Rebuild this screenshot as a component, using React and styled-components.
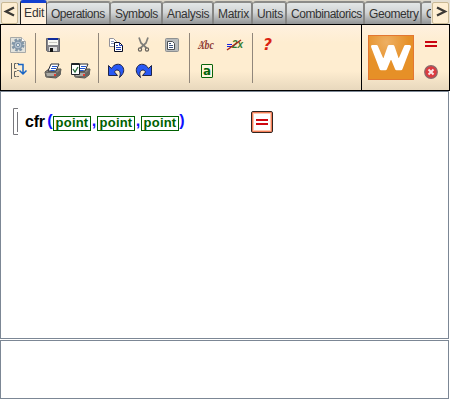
import React from 'react';
import styled, { createGlobalStyle } from 'styled-components';

const GlobalStyle = createGlobalStyle`
  * { box-sizing: border-box; }
  body { margin: 0; background: #fff; font-family: "Liberation Sans", Arial, sans-serif; }
`;

const Window = styled.div`
  width: 450px;
  height: 400px;
  overflow: hidden;
  display: flex;
  flex-direction: column;
  background: #fff;
`;

const TabBar = styled.div`
  display: flex;
  height: 24px;
  flex: none;
  background: #dad5c8;
`;

const ScrollSlot = styled.div`
  width: ${(p) => p.$width}px;
  padding: 2px 1px 0 ${(p) => p.$left}px;
  flex: none;
  background: #e5e0d5;
`;

const ScrollButton = styled.button`
  display: flex;
  align-items: center;
  justify-content: center;
  width: 17px;
  height: 22px;
  padding: 0;
  background: #feeed2;
  border: 1px solid #c9b995;
  border-radius: 2px;
`;

const TabStrip = styled.div`
  display: flex;
  flex: 1;
  min-width: 0;
  overflow: hidden;
`;

const Tab = styled.div`
  flex: none;
  width: ${(p) => p.$width}px;
  height: ${(p) => (p.$active ? 24 : 23)}px;
  margin-top: ${(p) => (p.$active ? 0 : 1)}px;
  padding: ${(p) => (p.$active ? '2px 0 0 3px' : '3px 0 0 4px')};
  font-size: 12px;
  line-height: 16px;
  letter-spacing: ${(p) => p.$track}px;
  white-space: nowrap;
  color: #333;
  background: ${(p) => (p.$active ? '#fff0dc' : 'linear-gradient(#e3e7e7, #d1d4d5 45%, #929495)')};
  border-top: ${(p) => (p.$active ? '3px solid #123fd0' : '2px solid #8b8b88')};
  border-right: ${(p) => (p.$active ? '1px solid #555' : '2px solid #858583')};
  border-left: ${(p) => (p.$active ? '1px solid #222' : '0')};
  border-radius: 3px 3px 0 0;
`;

const Panels = styled.div`
  display: flex;
  flex: none;
  height: 67px;
  border: 1px solid #000;
  background: linear-gradient(#fff1df 0, #feedd0 18px, #feedd0 46px, #e8d8bd 65px);
`;

const Toolbar = styled.div`
  display: flex;
  width: 361px;
  padding-top: 7px;
  border-right: 1px solid #000;
`;

const ToolGroup = styled.div`
  display: grid;
  grid-template-columns: repeat(${(p) => p.$cols}, 28px);
  grid-template-rows: 26px 26px;
  height: 52px;
  padding: 0 3px;
`;

const Divider = styled.div`
  width: 1px;
  height: 50px;
  margin-top: 1px;
  background: #91877b;
`;

const IconSvg = styled.svg`
  display: block;
  width: 28px;
  height: 26px;
  overflow: visible;
`;

const ActionPanel = styled.div`
  display: flex;
  flex: 1;
  padding: 10px 0 0 6px;
`;

const Logo = styled.svg`
  display: block;
  width: 46px;
  height: 45px;
`;

const ActionColumn = styled.div`
  display: flex;
  flex-direction: column;
  margin: -3px 0 0 2px;
`;

const Editor = styled.div`
  flex: none;
  height: 248px;
  border: 1px solid #7c8795;
  width: 449px;
  padding: 16px 0 0 12px;
`;

const Line = styled.div`
  display: flex;
  height: 28px;
`;

const Bracket = styled.svg`
  width: 6px;
  height: 28px;
`;

const FunctionName = styled.span`
  width: 22px;
  margin-left: 6px;
  padding-top: 3px;
  font-size: 16px;
  line-height: 22px;
  font-weight: 700;
  letter-spacing: -0.2px;
  color: #000;
`;

const Punctuation = styled.span`
  width: ${(p) => p.$width}px;
  padding-top: 2px;
  font-size: 16px;
  line-height: 22px;
  font-weight: 700;
  text-align: center;
  color: #1010ff;
`;

const Placeholder = styled.span`
  width: 38px;
  height: 15px;
  margin-top: 8px;
  border: 1px solid #006000;
  color: #006000;
  font-size: 13px;
  line-height: 12px;
  font-weight: 700;
  letter-spacing: 0.2px;
  text-align: center;
`;

const EvaluateButton = styled.button`
  display: flex;
  align-items: center;
  justify-content: center;
  width: 22px;
  height: 22px;
  margin: 3px 0 0 66px;
  padding: 0;
  background: #fff;
  border: 1px solid #33251f;
  border-radius: 2px;
  box-shadow: inset 0 0 0 1px #f47d58, inset 0 0 0 2px #ffc9b0;
`;

const Message = styled.div`
  flex: none;
  width: 449px;
  height: 59px;
  margin-top: 1px;
  border: 1px solid #7c8795;
`;

const Icon = ({ children }) => <IconSvg viewBox="0 0 28 26">{children}</IconSvg>;

const Chevron = ({ d }) => (
  <svg width="15" height="20" viewBox="0 0 15 20">
    <path d={d} fill="none" stroke="#3b3935" strokeWidth="2.300" />
  </svg>
);

const Gear = () => (
  <Icon>
    <path d="M6.500 5.500h11l4 4v11h-15z" fill="#e3e3dc" stroke="#a7a9a8" />
    <path d="M17.500 5.500v4h4" fill="#fff" stroke="#a7a9a8" />
    <circle cx="14" cy="13" r="5" fill="none" stroke="#8296a8" strokeWidth="3" strokeDasharray="2.400 1.530" />
    <circle cx="14" cy="13" r="4" fill="#b1bfcd" stroke="#8296a8" strokeWidth="1.500" />
    <circle cx="14" cy="13" r="1.600" fill="#edf0ef" stroke="#7890a5" />
  </Icon>
);

const Flow = () => (
  <Icon>
    <path d="M7.500 5v16M12.500 5.500h-2v5h2M12.500 13.500h-2v5h2" fill="none" stroke="#62625e" />
    <path d="M13 5.500h2M13 12.500h2M13 18.500h2" stroke="#77736b" />
    <path d="M14 6.500h5v9M15.500 12.500l3.500 3.500 3.500-3.500" fill="none" stroke="#1664c5" strokeWidth="1.500" />
  </Icon>
);

const Disk = () => (
  <Icon>
    <path d="M7.500 6.500h13v13h-12l-1-1z" fill="#85858a" stroke="#66676c" />
    <path d="M9 7h10v6H9z" fill="#f8f8f3" />
    <path d="M9 6h10v2H9z" fill="#102b9b" />
    <path d="M10 10.500h8" stroke="#c9c9c3" />
    <path d="M10 15h8v4h-8z" fill="#ddd" />
    <path d="M11 16h3v4h-3z" fill="#111" />
  </Icon>
);

const PrinterShape = () => (
  <g>
    <path d="M6 14l4-3 12 0-1 6-4 3-10-1z" fill="#83817d" stroke="#55534f" />
    <path d="M6.500 14.500h11v4h-10z" fill="#aaa9a3" stroke="#6a6964" />
    <path d="M18 15l4-4v5l-4 3z" fill="#666560" />
    <path d="M9 13l3-7h8l-3 7z" fill="#fff" stroke="#292c36" />
    <path d="M13 8.500h5M12 10.500h5M11.500 12.500h4" stroke="#2053ce" />
    <path d="M15 16h2v2h-2z" fill="#e23b30" />
  </g>
);

const Printer = () => <Icon><PrinterShape /></Icon>;

const PrintPreview = () => (
  <Icon>
    <g transform="translate(1 0)"><PrinterShape /></g>
    <path d="M4.500 5.500h8v11h-8z" fill="#fff" stroke="#20242a" />
    <path d="M4 6.500h9" stroke="#20242a" />
    <path d="M6 11l2 3 3-5" fill="none" stroke="#286c3b" strokeWidth="1.300" />
  </Icon>
);

const Copy = () => (
  <Icon>
    <path d="M7.500 6.500h4l3 3v5h-7z" fill="#fff" stroke="#92929b" />
    <path d="M9 9.500h3M9 11.500h4" stroke="#8494bd" />
    <path d="M12.500 10.500h5l3 3v6h-8z" fill="#fff" stroke="#090d22" />
    <path d="M17.500 10.500v3h3M14 13.500h2M14 15.500h5M14 17.500h5" fill="none" stroke="#2440b4" />
  </Icon>
);

const Cut = () => (
  <Icon>
    <path d="M9 5.500l2 5.500 5.500 5M18 5.500l-2 5.500-5.500 5" fill="none" stroke="#7f7e79" strokeWidth="1.700" />
    <circle cx="10" cy="17.500" r="1.600" fill="none" stroke="#67625b" strokeWidth="1.200" />
    <circle cx="17" cy="17.500" r="1.600" fill="none" stroke="#67625b" strokeWidth="1.200" />
  </Icon>
);

const Paste = () => (
  <Icon>
    <rect x="7.500" y="6.500" width="13" height="13" rx="1" fill="#b8bbbc" stroke="#8e9192" />
    <path d="M9.500 9.500h5l2 2v6h-7z" fill="#fff" stroke="#4b4f52" />
    <path d="M11 11.500h2M11 13.500h4M11 15.500h4" stroke="#3e557e" />
  </Icon>
);

const UndoPath = () => (
  <path d="M6.500 7.500l3 3C12 5.500 18 5 20.500 8.500c2.500 4 1 7.500-3 11 1.500-4 .5-7.500-2.500-7.500-1.500 0-2 1-2.500 2l3 3.500h-9z" fill="#2858f4" stroke="#202548" strokeWidth="1" strokeLinejoin="round" />
);
const Undo = () => <Icon><UndoPath /></Icon>;
const Redo = () => <Icon><g transform="translate(28 0) scale(-1 1)"><UndoPath /></g></Icon>;

const TextStyle = () => (
  <Icon>
    <text x="5" y="17" fontFamily="Liberation Serif, serif" fontSize="12" fontStyle="italic" fontWeight="700" fill="#91413a" textLength="16" lengthAdjust="spacingAndGlyphs">Abc</text>
    <path d="M5 16.500h2l5-8" fill="none" stroke="#91413a" strokeWidth="0.800" />
  </Icon>
);

const ClearStyle = () => (
  <Icon>
    <path d="M6 12.500h5M6 14.500h5" stroke="#1922dc" strokeWidth="1" />
    <text x="11" y="16" fontFamily="Liberation Sans, sans-serif" fontSize="11" fontStyle="italic" fontWeight="700" fill="#327b30" textLength="11" lengthAdjust="spacingAndGlyphs">2x</text>
    <path d="M6 18L20 8" stroke="#aa2919" strokeWidth="1.500" />
  </Icon>
);

const Variable = () => (
  <Icon>
    <rect x="8.500" y="6.500" width="11" height="13" rx="0.500" fill="#fff5df" stroke="#08650b" />
    <text x="10" y="17" fontFamily="DejaVu Sans, sans-serif" fontSize="13" fontWeight="700" fill="#08650b" textLength="8" lengthAdjust="spacingAndGlyphs">a</text>
  </Icon>
);

const Help = () => (
  <Icon>
    <text x="7" y="18" fontFamily="DejaVu Sans, sans-serif" fontSize="15" fontStyle="italic" fontWeight="700" fill="#db2312" textLength="9" lengthAdjust="spacingAndGlyphs">?</text>
  </Icon>
);

const Equals = () => (
  <Icon><path d="M9 10h12M9 14h12" stroke="#ca0510" strokeWidth="2" /></Icon>
);

const Close = () => (
  <Icon>
    <circle cx="15" cy="14" r="6.300" fill="#dc3b40" stroke="#89696b" strokeWidth="1.200" />
    <path d="M12.500 11.500l5 5M17.500 11.500l-5 5" stroke="#f9e6e5" strokeWidth="2" />
  </Icon>
);

const tabs = [
  ['Edit', 27, -0.1, true],
  ['Operations', 64, -0.5],
  ['Symbols', 52, -0.45],
  ['Analysis', 51, -0.3],
  ['Matrix', 39, -0.3],
  ['Units', 34, -0.3],
  ['Combinatorics', 78, -0.45],
  ['Geometry', 57, -0.4],
  ['C', 20, 0],
];

export default function App() {
  return (
    <>
      <GlobalStyle />
      <Window>
        <TabBar>
          <ScrollSlot $width={20} $left={1}>
            <ScrollButton aria-label="Previous tabs"><Chevron d="M12 4.500L4 8.500l8 4" /></ScrollButton>
          </ScrollSlot>
          <TabStrip>
            {tabs.map(([name, width, track, active]) => (
              <Tab key={name} $width={width} $track={track} $active={active}>{name}</Tab>
            ))}
          </TabStrip>
          <ScrollSlot $width={19} $left={1}>
            <ScrollButton aria-label="Next tabs"><Chevron d="M4 4.500l8 4-8 4" /></ScrollButton>
          </ScrollSlot>
        </TabBar>
        <Panels>
          <Toolbar>
            <ToolGroup $cols={1}><Gear /><Flow /></ToolGroup>
            <Divider />
            <ToolGroup $cols={2}><Disk /><span /><Printer /><PrintPreview /></ToolGroup>
            <Divider />
            <ToolGroup $cols={3}><Copy /><Cut /><Paste /><Undo /><Redo /></ToolGroup>
            <Divider />
            <ToolGroup $cols={2}><TextStyle /><ClearStyle /><Variable /></ToolGroup>
            <Divider />
            <ToolGroup $cols={1}><Help /></ToolGroup>
          </Toolbar>
          <ActionPanel>
            <Logo viewBox="0 0 46 45">
              <defs>
                <radialGradient id="logoGlow" cx="40%" cy="15%" r="50%">
                  <stop offset="0" stopColor="#eeb064" />
                  <stop offset="1" stopColor="#e69027" />
                </radialGradient>
              </defs>
              <rect x="0.500" y="0.500" width="45" height="44" fill="url(#logoGlow)" stroke="#e37731" />
              <path d="M4.500 11.500h4l7 16 5.700-16h3.800l5.500 16 7-16h4L33 33.800h-4.500L23 20.500l-5.500 13.300H13z" fill="#fff" stroke="#fff" strokeWidth="3" strokeLinejoin="round" />
            </Logo>
            <ActionColumn><Equals /><Close /></ActionColumn>
          </ActionPanel>
        </Panels>
        <Editor>
          <Line>
            <Bracket viewBox="0 0 6 28"><path d="M5 0.500H0.500v26H5M4.500 4v20" fill="none" stroke="#77777c" /></Bracket>
            <FunctionName>cfr</FunctionName>
            <Punctuation $width={6}>(</Punctuation>
            <Placeholder>point</Placeholder>
            <Punctuation $width={6}>,</Punctuation>
            <Placeholder>point</Placeholder>
            <Punctuation $width={6}>,</Punctuation>
            <Placeholder>point</Placeholder>
            <Punctuation $width={6}>)</Punctuation>
            <EvaluateButton aria-label="Evaluate">
              <svg width="14" height="14"><path d="M1 5h12M1 9h12" stroke="#cf0810" strokeWidth="2" /></svg>
            </EvaluateButton>
          </Line>
        </Editor>
        <Message />
      </Window>
    </>
  );
}
